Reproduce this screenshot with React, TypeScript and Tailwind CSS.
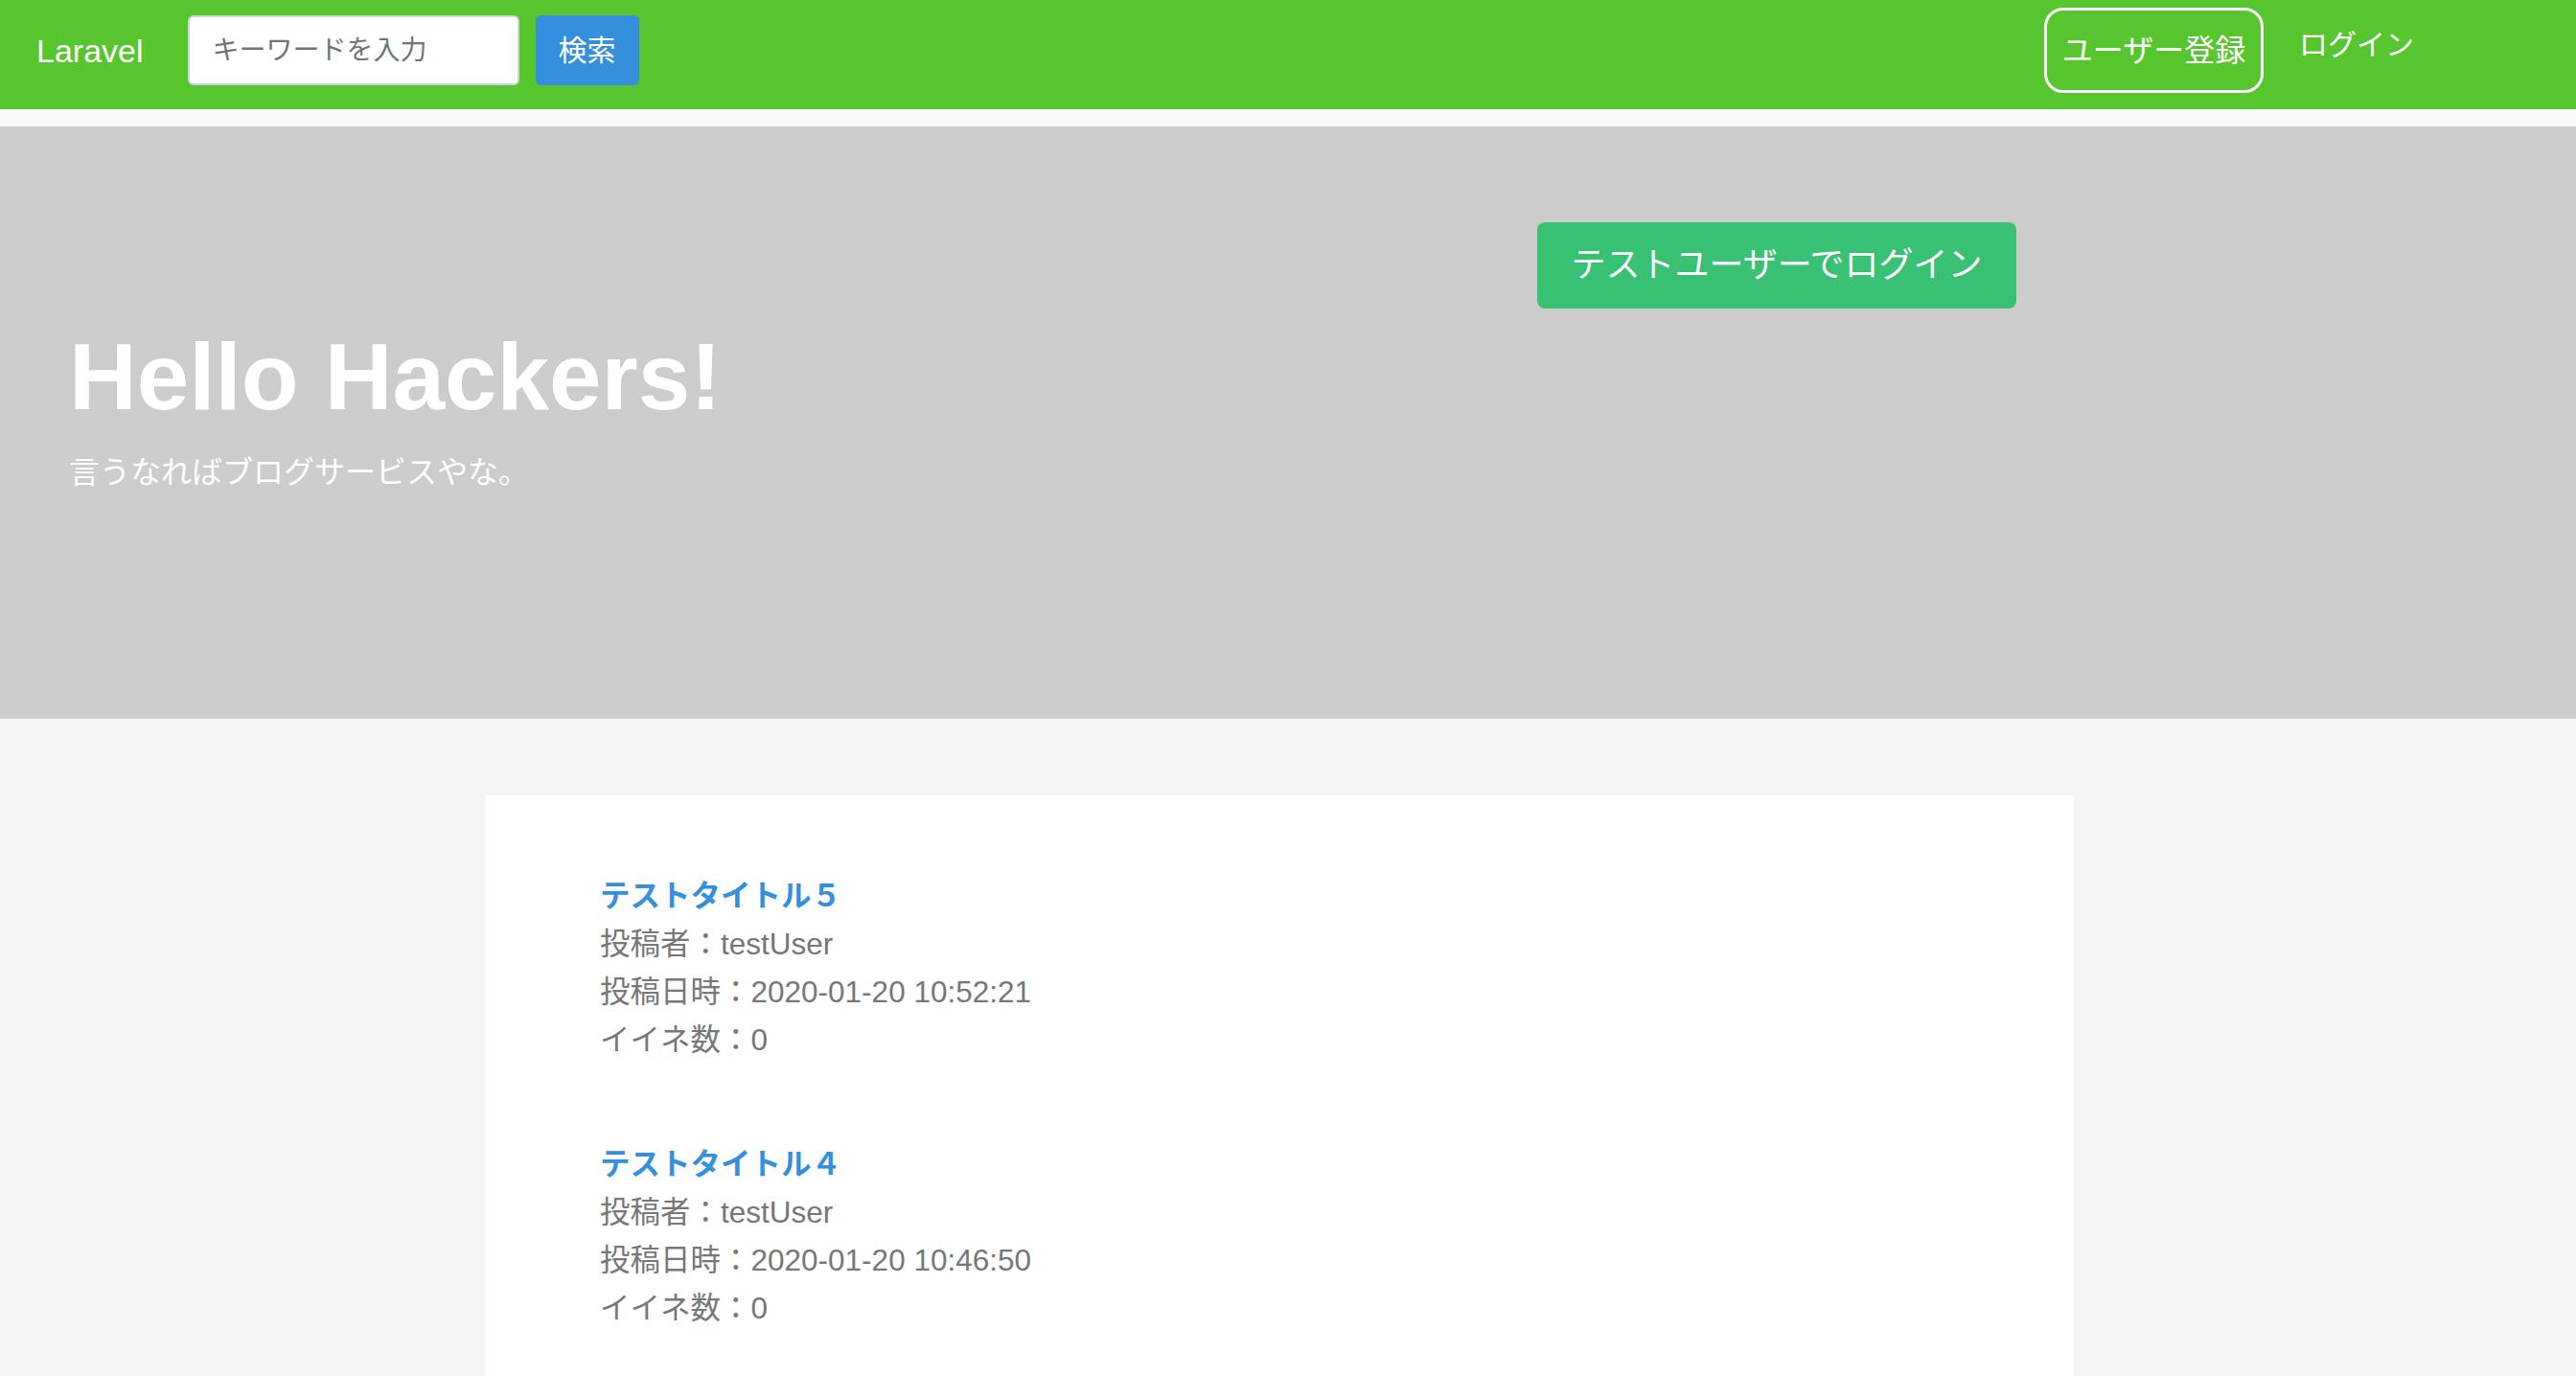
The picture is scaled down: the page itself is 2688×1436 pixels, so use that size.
import React from "react";

const FONT = { fontFamily: '"Liberation Sans", "Noto Sans CJK JP", sans-serif' };

const posts = [
  { title: "テストタイトル５", user: "testUser", date: "2020-01-20 10:52:21", likes: 0 },
  { title: "テストタイトル４", user: "testUser", date: "2020-01-20 10:46:50", likes: 0 },
];

function Post({ p }: { p: (typeof posts)[number] }) {
  return (
    <div className="mb-[80px] text-[31.5px] leading-[50px]">
      <a href="#" className="block font-bold text-[#3490dc] no-underline">
        {p.title}
      </a>
      <div className="text-[#777777]">投稿者：{p.user}</div>
      <div className="text-[#777777]">投稿日時：{p.date}</div>
      <div className="text-[#777777]">イイネ数：{p.likes}</div>
    </div>
  );
}

export default function App() {
  return (
    <div style={FONT} className="h-[1436px] w-[2688px] overflow-hidden bg-[#f5f5f5]">
      {/* Navbar */}
      <nav className="flex h-[114px] items-center justify-between bg-[#57c52d] pb-[9px] pl-[38px] pr-[169px]">
        <div className="flex items-center">
          <span className="text-[34px] leading-none text-white">Laravel</span>
          <input
            type="text"
            placeholder="キーワードを入力"
            className="ml-[46px] h-[73px] w-[346px] rounded-[6px] border-2 border-[#ced4da] bg-white px-[24px] text-[28px] text-[#495057] placeholder:text-[#6c757d] outline-none"
          />
          <button className="ml-[17px] h-[73px] w-[108px] rounded-[6px] bg-[#3490dc] text-[30px] leading-none text-white">
            検索
          </button>
        </div>
        <div className="flex items-start self-start">
          <button className="mt-[8px] h-[89px] w-[229px] rounded-[20px] border-[3px] border-white text-[32px] leading-none text-white">
            ユーザー登録
          </button>
          <span className="ml-[37px] mt-[27px] text-[30px] leading-[40px] text-white">ログイン</span>
        </div>
      </nav>

      {/* light strip */}
      <div className="h-[18px] bg-[#f8f9fa]" />

      {/* Hero */}
      <section className="h-[618px] bg-[#cccccc] pl-[72px] pt-[100px]">
        <div className="flex">
          <button className="ml-[1532px] h-[90px] w-[500px] rounded-[8px] bg-[#38c172] text-[36px] leading-none text-white">
            テストユーザーでログイン
          </button>
        </div>
        <h1 className="mt-[13px] text-[98px] font-bold leading-[1.2] text-white">Hello Hackers!</h1>
        <p className="mt-[16px] text-[32px] leading-[48px] text-white">言うなればブログサービスやな。</p>
      </section>

      {/* Content */}
      <div className="pt-[80px]">
        <div className="ml-[506px] min-h-[700px] w-[1658px] bg-white pl-[120px] pt-[80px]">
          {posts.map((p) => (
            <Post key={p.title} p={p} />
          ))}
        </div>
      </div>
    </div>
  );
}
